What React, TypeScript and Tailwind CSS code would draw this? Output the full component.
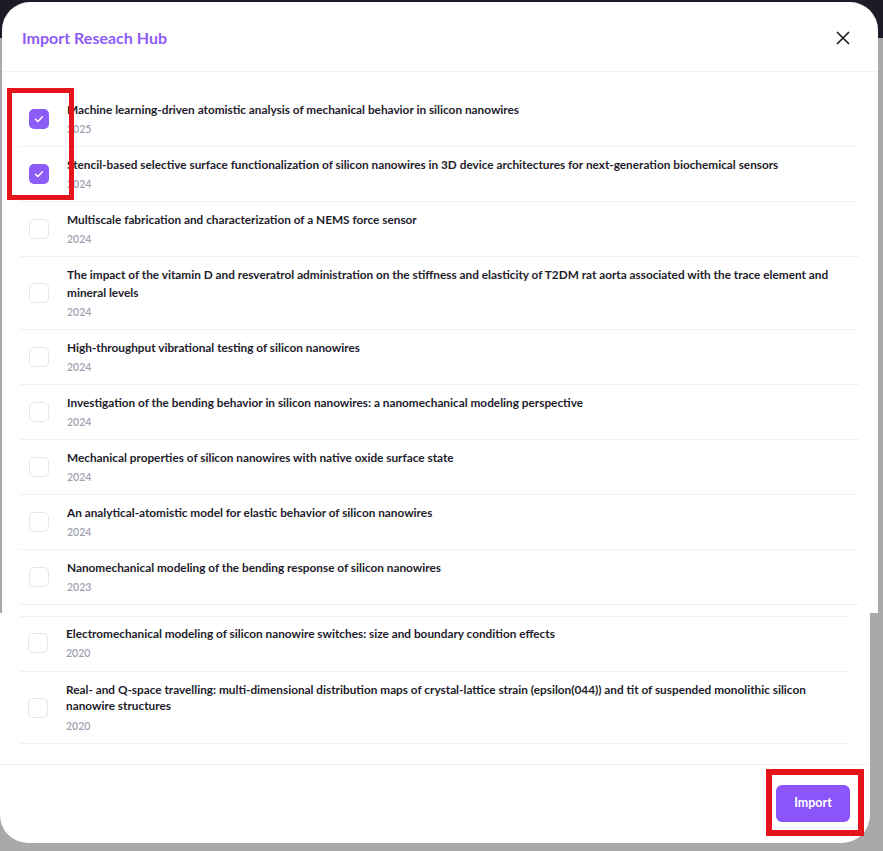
import React, { useState } from "react";

type Paper = { title: string; year: string };

const topPapers: Paper[] = [
  { title: "Machine learning-driven atomistic analysis of mechanical behavior in silicon nanowires", year: "2025" },
  { title: "Stencil-based selective surface functionalization of silicon nanowires in 3D device architectures for next-generation biochemical sensors", year: "2024" },
  { title: "Multiscale fabrication and characterization of a NEMS force sensor", year: "2024" },
  { title: "The impact of the vitamin D and resveratrol administration on the stiffness and elasticity of T2DM rat aorta associated with the trace element and mineral levels", year: "2024" },
  { title: "High-throughput vibrational testing of silicon nanowires", year: "2024" },
  { title: "Investigation of the bending behavior in silicon nanowires: a nanomechanical modeling perspective", year: "2024" },
  { title: "Mechanical properties of silicon nanowires with native oxide surface state", year: "2024" },
  { title: "An analytical-atomistic model for elastic behavior of silicon nanowires", year: "2024" },
  { title: "Nanomechanical modeling of the bending response of silicon nanowires", year: "2023" },
];

const bottomPapers: Paper[] = [
  { title: "Electromechanical modeling of silicon nanowire switches: size and boundary condition effects", year: "2020" },
  { title: "Real- and Q-space travelling: multi-dimensional distribution maps of crystal-lattice strain (epsilon(044)) and tit of suspended monolithic silicon nanowire structures", year: "2020" },
];

function Checkbox({ checked, onClick }: { checked: boolean; onClick: () => void }) {
  return (
    <button
      onClick={onClick}
      className={
        checked
          ? "w-[20px] h-[20px] shrink-0 rounded-[5px] bg-[#8b5cf6] flex items-center justify-center"
          : "w-[20px] h-[20px] shrink-0 rounded-[5px] border-[1.5px] border-[#e6e4f0] bg-white"
      }
    >
      {checked && (
        <svg width="12" height="12" viewBox="0 0 12 12" fill="none">
          <path d="M2.5 6.2l2.4 2.3 4.6-4.8" stroke="white" strokeWidth="1.5" strokeLinecap="round" strokeLinejoin="round" />
        </svg>
      )}
    </button>
  );
}

function Row({
  paper,
  checked,
  onToggle,
  pad,
}: {
  paper: Paper;
  checked: boolean;
  onToggle: () => void;
  pad: string;
}) {
  return (
    <div className={`flex items-center gap-[18px] pl-[9px] border-b border-[#efeff4] ${pad}`}>
      <Checkbox checked={checked} onClick={onToggle} />
      <div className="flex flex-col gap-[2px] min-w-0">
        <p className="text-[11.8px] leading-[18px] font-bold text-[#1e1c2b]">{paper.title}</p>
        <p className="text-[10.5px] leading-[16px] font-semibold text-[#a19fb2]">{paper.year}</p>
      </div>
    </div>
  );
}

export default function App() {
  const [selected, setSelected] = useState<string[]>([topPapers[0].title, topPapers[1].title]);

  const toggle = (title: string) => {
    setSelected((prev) => (prev.includes(title) ? prev.filter((t) => t !== title) : [...prev, title]));
  };

  return (
    <div className="relative w-[883px] h-[851px] overflow-hidden bg-[linear-gradient(to_bottom,#1c1b28_38px,#a9a9a9_38px)] font-['Lato','Liberation_Sans',sans-serif]">
      <div className="flex flex-col pt-[2px]">
        {/* top half of the modal */}
        <section className="ml-[2px] w-[876px] h-[611px] bg-white rounded-t-[28px] flex flex-col overflow-hidden">
          <div className="h-[70px] shrink-0 flex items-center justify-between pl-[20px] pr-[27px] pt-[2px] border-b border-[#efeff4]">
            <h2 className="text-[16px] font-bold text-[#8f5cf7]">Import Reseach Hub</h2>
            <button className="w-[16px] h-[16px] flex items-center justify-center">
              <svg width="14" height="14" viewBox="0 0 14 14" fill="none">
                <path d="M1.5 1.5l11 11M12.5 1.5l-11 11" stroke="#1f1f24" strokeWidth="1.7" strokeLinecap="round" />
              </svg>
            </button>
          </div>
          <div className="flex flex-col pl-[18px] pr-[19px] pt-[20px]">
            {topPapers.map((p) => (
              <Row
                key={p.title}
                paper={p}
                checked={selected.includes(p.title)}
                onToggle={() => toggle(p.title)}
                pad="pt-[9px] pb-[9px]"
              />
            ))}
          </div>
        </section>

        {/* bottom half of the modal */}
        <section className="w-[870px] h-[230px] bg-white rounded-b-[28px] flex flex-col">
          <div className="flex flex-col px-[20px] pt-[3px]">
            <div className="border-b border-[#efeff4]" />
            <div className="flex items-center gap-[18px] pl-[8px] pt-[8px] pb-[10px] border-b border-[#efeff4]">
              <Checkbox checked={selected.includes(bottomPapers[0].title)} onClick={() => toggle(bottomPapers[0].title)} />
              <div className="flex flex-col gap-[2px]">
                <p className="text-[11.8px] leading-[18px] font-bold text-[#1e1c2b]">{bottomPapers[0].title}</p>
                <p className="text-[10.5px] leading-[16px] font-semibold text-[#a19fb2]">{bottomPapers[0].year}</p>
              </div>
            </div>
            <div className="flex items-center gap-[18px] pl-[8px] pt-[10px] pb-[9px] border-b border-[#efeff4]">
              <Checkbox checked={selected.includes(bottomPapers[1].title)} onClick={() => toggle(bottomPapers[1].title)} />
              <div className="flex flex-col gap-[4px]">
                <p className="text-[11.8px] leading-[16px] font-bold text-[#1e1c2b]">{bottomPapers[1].title}</p>
                <p className="text-[10.5px] leading-[16px] font-semibold text-[#a19fb2]">{bottomPapers[1].year}</p>
              </div>
            </div>
          </div>
          <div className="mt-[20px] border-t border-[#efeff4] flex justify-end px-[20px] pt-[20px]">
            <button className="w-[74px] h-[37px] rounded-[6px] bg-[#8b55fb] text-white text-[12.5px] font-bold">
              Import
            </button>
          </div>
        </section>
      </div>

      {/* red annotation boxes */}
      <div className="absolute left-[7px] top-[88px] w-[67px] h-[112px] border-[5px] border-[#e5141c] pointer-events-none" />
      <div className="absolute left-[766px] top-[769px] w-[98px] h-[67px] border-[6px] border-[#e5141c] pointer-events-none" />
    </div>
  );
}
